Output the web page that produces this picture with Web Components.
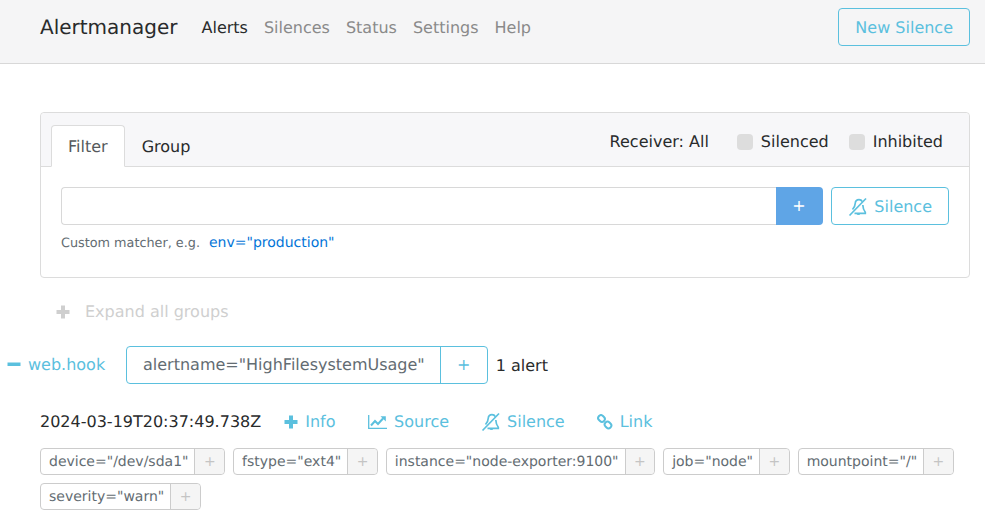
<!DOCTYPE html>
<html>
<head>
<meta charset="utf-8">
<title>Alertmanager</title>
<style>
    body {
        margin: 0;
        background: #fff;
        color: #292b2c;
        font-family: "DejaVu Sans", sans-serif;
        font-size: 16px;
        line-height: 24px;
        text-rendering: geometricPrecision;
    }
</style>
</head>
<body>
<am-navbar></am-navbar>
<am-filter></am-filter>
<am-expand></am-expand>
<am-group></am-group>
<am-alert></am-alert>

<script>
const icons = {
    plus: `<svg viewBox="0 0 14 14" width="14" height="14"><path fill="currentColor" d="M5 .5h4V5h4.500v4H9v4.500H5V9H.5V5H5z"/></svg>`,
    minus: `<svg viewBox="0 0 14 14" width="14" height="14"><path fill="currentColor" d="M.5 4.500h13V8H.5z"/></svg>`,
    chart: `<svg viewBox="0 0 20 16" width="20" height="16" fill="none" stroke="currentColor"><path stroke-width="1.300" d="M.7 1v13.400h18.300"/><path stroke-width="2" d="M3 11.500l4-4.500 3 3 5-5.500"/><path fill="currentColor" stroke="none" d="M12.500 2.200h5.300v5.300z"/></svg>`,
    bell: `<svg viewBox="0 0 20 20" width="20" height="20" fill="none" stroke="currentColor" stroke-width="1.700"><path d="M1.500 18.500L18 1.500"/><path d="M4.500 12.500c2-2 2.600-3.500 2.700-6C7.400 4 9.300 2.700 11 2.700c1.500 0 2.700.8 3.300 2"/><path d="M14.800 8c.2 3.500.9 5.500 2.500 7.300v1H6.500"/><path fill="currentColor" stroke="none" d="M8.500 16.200h3.800a1.900 1.900 0 0 1-3.800 0z"/></svg>`,
    link: `<svg viewBox="0 0 16 16" width="16" height="16" fill="none" stroke="currentColor" stroke-width="2"><rect x="-3.500" y="-2.800" width="7" height="5.600" rx="2.800" transform="translate(4.500 4.500) rotate(45)"/><rect x="-3.500" y="-2.800" width="7" height="5.600" rx="2.800" transform="translate(11 11) rotate(45)"/></svg>`
};

class AmNavbar extends HTMLElement {
    constructor() {
        super();
        this.shadow = this.attachShadow({mode: 'open'});
        this.shadow.innerHTML = `
        <style>
            :host {
                display: flex;
                align-items: center;
                padding: 8px 15px 17px 40px;
                background: #f5f5f6;
                border-bottom: 1px solid #d8d8d8;
            }
            .brand {
                font-size: 20px;
                color: #292b2c;
                margin-right: 16px;
            }
            nav { display: flex; flex: 1; padding-top: 2px; }
            a {
                padding: 0 8px;
                color: #8a8a8a;
                text-decoration: none;
            }
            a.active { color: #292b2c; }
        </style>
        <span class="brand">Alertmanager</span>
        <nav>
            <a class="active">Alerts</a>
            <a>Silences</a>
            <a>Status</a>
            <a>Settings</a>
            <a>Help</a>
        </nav>
        <am-btn>New Silence</am-btn>
        `;
    }
}

class AmBtn extends HTMLElement {
    constructor() {
        super();
        this.attachShadow({mode: 'open'}).innerHTML = `
        <style>
            :host {
                display: inline-flex;
                align-items: center;
                gap: 6px;
                height: 38px;
                box-sizing: border-box;
                padding: 2px 16px 0;
                border: 1px solid #5bc0de;
                border-radius: 4px;
                color: #5bc0de;
            }
        </style>
        <slot></slot>
        `;
    }
}

class AmFilter extends HTMLElement {
    constructor() {
        super();
        this.attachShadow({mode: 'open'}).innerHTML = `
        <style>
            :host {
                display: block;
                box-sizing: border-box;
                height: 166px;
                margin: 48px 15px 0 40px;
                border: 1px solid #dcdcdc;
                border-radius: 4px;
            }
            .head {
                display: flex;
                align-items: flex-end;
                height: 54px;
                box-sizing: border-box;
                padding: 0 26px 0 10px;
                background: #f7f7f9;
                border-bottom: 1px solid #dcdcdc;
                border-radius: 4px 4px 0 0;
            }
            .tab {
                box-sizing: border-box;
                height: 42px;
                padding: 9px 16px 0;
                margin-bottom: -1px;
                border: 1px solid transparent;
                border-radius: 4px 4px 0 0;
                color: #292b2c;
            }
            .tab.active {
                background: #fff;
                color: #55595c;
                border-color: #dcdcdc #dcdcdc #fff;
            }
            .opts {
                display: flex;
                align-items: center;
                margin-left: auto;
                align-self: center;
                height: 24px;
                padding-top: 4px;
            }
            .check { display: flex; align-items: center; gap: 8px; margin-left: 28px; }
            .check + .check { margin-left: 20px; }
            .check i {
                width: 16px;
                height: 16px;
                border-radius: 4px;
                background: #dddddd;
            }
            .body { padding: 20px 20px 0; }
            .row { display: flex; }
            .input {
                flex: 1;
                height: 38px;
                box-sizing: border-box;
                border: 1px solid #d8d8d8;
                border-right: 0;
                border-radius: 4px 0 0 4px;
            }
            .add {
                width: 45px;
                height: 38px;
                padding-right: 2px;
                display: flex;
                align-items: center;
                justify-content: center;
                background: #5fa5e6;
                color: #fff;
                border-radius: 0 4px 4px 0;
            }
            am-btn { margin-left: 8px; }
            .help {
                display: flex;
                align-items: baseline;
                margin-top: 6px;
                font-size: 12.800px;
                line-height: 24px;
                color: #636c72;
            }
            .help a {
                font-size: 14px;
                margin-left: 9px;
                color: #0275d8;
            }
        </style>
        <div class="head">
            <div class="tab active">Filter</div>
            <div class="tab">Group</div>
            <div class="opts">
                <span>Receiver: All</span>
                <span class="check"><i></i>Silenced</span>
                <span class="check"><i></i>Inhibited</span>
            </div>
        </div>
        <div class="body">
            <div class="row">
                <div class="input"></div>
                <div class="add">+</div>
                <am-btn>${icons.bell}<span>Silence</span></am-btn>
            </div>
            <div class="help"><span>Custom matcher, e.g.</span><a>env="production"</a></div>
        </div>
        `;
    }
}

class AmExpand extends HTMLElement {
    constructor() {
        super();
        this.attachShadow({mode: 'open'}).innerHTML = `
        <style>
            :host {
                display: flex;
                align-items: center;
                gap: 15px;
                height: 24px;
                margin: 22px 0 0 56px;
                color: #cfcfcf;
            }
            svg { display: block; }
        </style>
        ${icons.plus}<span>Expand all groups</span>
        `;
    }
}

class AmGroup extends HTMLElement {
    constructor() {
        super();
        this.attachShadow({mode: 'open'}).innerHTML = `
        <style>
            :host {
                display: flex;
                align-items: center;
                height: 38px;
                margin: 22px 0 0 7px;
            }
            .toggle {
                display: flex;
                align-items: center;
                gap: 7px;
                width: 119px;
                color: #5bc0de;
            }
            .matcher {
                display: flex;
                height: 38px;
                box-sizing: border-box;
                border: 1px solid #5bc0de;
                border-radius: 4px;
                align-items: center;
            }
            .name { padding: 0 15px 0 16px; color: #636c72; }
            .plus {
                align-self: stretch;
                display: flex;
                align-items: center;
                justify-content: center;
                width: 46px;
                border-left: 1px solid #5bc0de;
                color: #5bc0de;
            }
            .count { margin-left: 8px; padding-top: 2px; }
            svg { display: block; }
        </style>
        <span class="toggle">${icons.minus}<span>web.hook</span></span>
        <span class="matcher"><span class="name">alertname="HighFilesystemUsage"</span><span class="plus">+</span></span>
        <span class="count">1 alert</span>
        `;
    }
}

class AmLabel extends HTMLElement {
    constructor() {
        super();
        this.attachShadow({mode: 'open'}).innerHTML = `
        <style>
            :host {
                display: inline-flex;
                box-sizing: border-box;
                height: 27px;
                border: 1px solid #cccccc;
                border-radius: 4px;
                font-size: 14px;
                line-height: 24px;
                color: #636c72;
            }
            .text { padding: 1px 6px 0 8px; }
            .plus {
                width: 28.600px;
                display: flex;
                align-items: center;
                justify-content: center;
                background: #f5f5f5;
                border-left: 1px solid #cccccc;
                border-radius: 0 4px 4px 0;
                color: #c4c4c4;
            }
        </style>
        <span class="text"><slot></slot></span><span class="plus">+</span>
        `;
    }
}

class AmAlert extends HTMLElement {
    constructor() {
        super();
        this.attachShadow({mode: 'open'}).innerHTML = `
        <style>
            :host {
                display: block;
                margin: 26px 15px 0 40px;
            }
            .top {
                display: flex;
                align-items: center;
                height: 24px;
            }
            .time { margin-right: 23px; }
            .act {
                display: flex;
                align-items: center;
                gap: 7px;
                margin-right: 32px;
                color: #5bc0de;
            }
            .act.wide { gap: 6px; }
            .act.info { margin-right: 32.600px; }
            svg { display: block; }
            .labels {
                display: flex;
                flex-wrap: wrap;
                gap: 8px;
                margin-top: 14px;
            }
        </style>
        <div class="top">
            <span class="time">2024-03-19T20:37:49.738Z</span>
            <span class="act info">${icons.plus}<span>Info</span></span>
            <span class="act wide">${icons.chart}<span>Source</span></span>
            <span class="act wide">${icons.bell}<span>Silence</span></span>
            <span class="act">${icons.link}<span>Link</span></span>
        </div>
        <div class="labels">
            <am-label>device="/dev/sda1"</am-label>
            <am-label>fstype="ext4"</am-label>
            <am-label>instance="node-exporter:9100"</am-label>
            <am-label>job="node"</am-label>
            <am-label>mountpoint="/"</am-label>
            <am-label>severity="warn"</am-label>
        </div>
        `;
    }
}

customElements.define('am-btn', AmBtn);
customElements.define('am-label', AmLabel);
customElements.define('am-navbar', AmNavbar);
customElements.define('am-filter', AmFilter);
customElements.define('am-expand', AmExpand);
customElements.define('am-group', AmGroup);
customElements.define('am-alert', AmAlert);
</script>
</body>
</html>
